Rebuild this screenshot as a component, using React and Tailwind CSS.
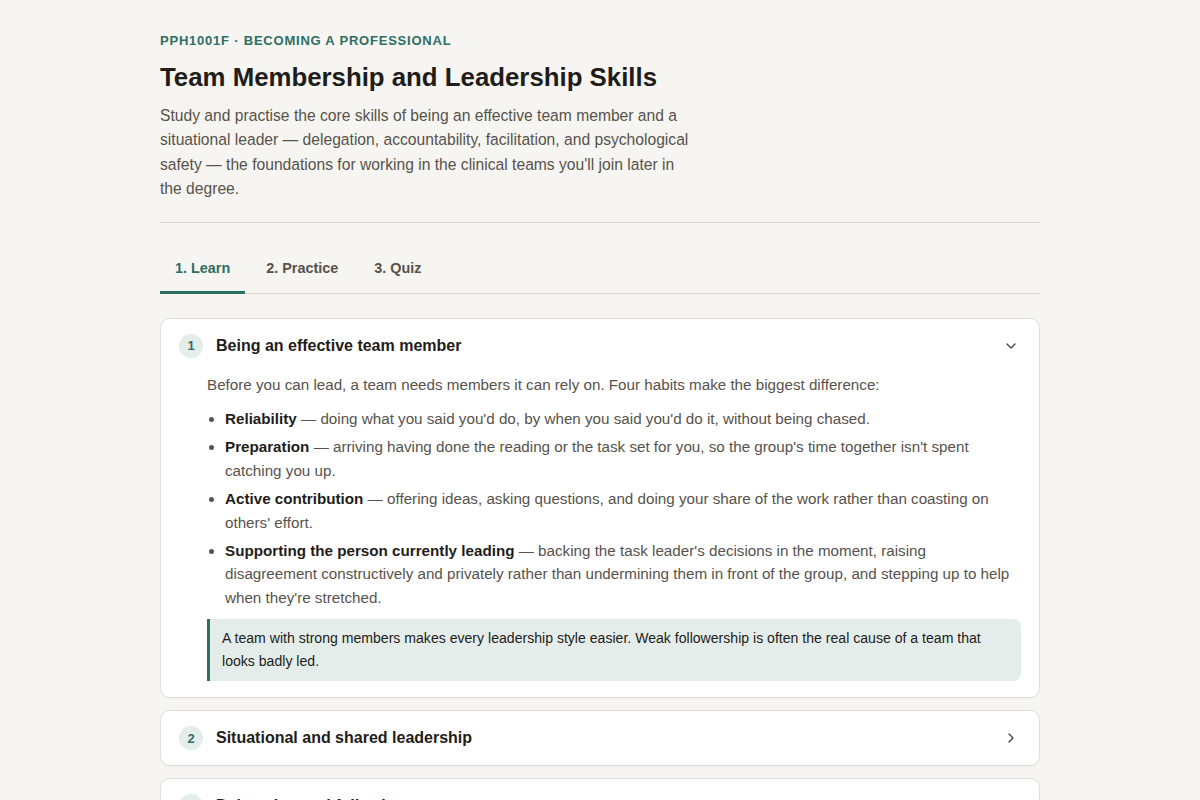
import { ChevronDown, ChevronRight } from 'lucide-react';

const habits = [
  {
    label: 'Reliability',
    text: "doing what you said you'd do, by when you said you'd do it, without being chased.",
  },
  {
    label: 'Preparation',
    text: "arriving having done the reading or the task set for you, so the group's time together isn't spent catching you up.",
  },
  {
    label: 'Active contribution',
    text: "offering ideas, asking questions, and doing your share of the work rather than coasting on others' effort.",
  },
  {
    label: 'Supporting the person currently leading',
    text: "backing the task leader's decisions in the moment, raising disagreement constructively and privately rather than undermining them in front of the group, and stepping up to help when they're stretched.",
  },
];

const tabs = ['1. Learn', '2. Practice', '3. Quiz'];

function SectionHeader({ num, title, open }) {
  return (
    <button className="w-full flex items-center gap-[13px] pl-[18px] pr-5 pt-[15px] pb-[14.5px] text-left">
      <span className="w-6 h-6 rounded-full bg-[#e4ede9] text-[#2f6e62] text-[13px] font-bold flex items-center justify-center shrink-0">
        {num}
      </span>
      <span className="flex-1 text-[16px] leading-6 font-bold text-[#1f1c1a]">{title}</span>
      {open ? (
        <ChevronDown className="w-4 h-4 text-[#4a4540]" strokeWidth={2} />
      ) : (
        <ChevronRight className="w-4 h-4 text-[#4a4540]" strokeWidth={2} />
      )}
    </button>
  );
}

export default function App() {
  return (
    <div className="min-h-screen bg-[#f6f5f1] font-['Liberation_Sans',Arial,sans-serif]">
      <div className="w-[880px] mx-auto pt-[31px] pb-10">
        {/* Header */}
        <div className="text-[13px] leading-5 font-bold tracking-[0.06em] uppercase text-[#2f6e62]">
          PPH1001F · Becoming a Professional
        </div>
        <h1 className="mt-[10px] text-[25.8px] leading-8 font-bold text-[#1f1c1a]">
          Team Membership and Leadership Skills
        </h1>
        <p className="mt-[11px] w-[532px] text-[15.65px] leading-[24.4px] text-[#57524c]">
          Study and practise the core skills of being an effective team member and a situational
          leader — delegation, accountability, facilitation, and psychological safety — the
          foundations for working in the clinical teams you'll join later in the degree.
        </p>

        <div className="mt-[20px] border-t border-[#dcd8d1]" />

        {/* Tabs */}
        <div className="mt-6 flex gap-[6px] border-b border-[#dcd8d1]">
          {tabs.map((t, i) => (
            <button
              key={t}
              className={`-mb-px px-[15px] pt-[11px] pb-[13px] text-[14.4px] leading-5 font-bold border-b-[3px] ${
                i === 0 ? 'border-[#2f6e62] text-[#2f6e62]' : 'border-transparent text-[#57524c]'
              }`}
            >
              {t}
            </button>
          ))}
        </div>

        {/* Sections */}
        <div className="mt-6 flex flex-col gap-3">
          <div className="bg-white border border-[#e2ded7] rounded-[10px] shadow-[0_1px_2px_rgba(0,0,0,0.04)]">
            <SectionHeader num="1" title="Being an effective team member" open />
            <div className="pt-[1px] pl-[46px] pr-[18px] pb-4 text-[15.2px] leading-6 text-[#57524c]">
              <p>
                Before you can lead, a team needs members it can rely on. Four habits make the
                biggest difference:
              </p>
              <ul className="mt-[10px] pl-[18px] list-disc flex flex-col gap-[4.5px] marker:text-[#57524c]">
                {habits.map((h) => (
                  <li key={h.label} className="leading-[23.6px]">
                    <strong className="font-bold text-[#1f1c1a]">{h.label}</strong> — {h.text}
                  </li>
                ))}
              </ul>
              <div className="mt-[10px] border-l-[3px] border-[#2f6e62] bg-[#e4ede9] rounded-r-lg pl-3 pr-4 py-2 text-[14.08px] leading-[23px] text-[#1f1c1a]">
                A team with strong members makes every leadership style easier. Weak followership
                is often the real cause of a team that looks badly led.
              </div>
            </div>
          </div>

          <div className="bg-white border border-[#e2ded7] rounded-[10px] shadow-[0_1px_2px_rgba(0,0,0,0.04)]">
            <SectionHeader num="2" title="Situational and shared leadership" />
          </div>

          <div className="bg-white border border-[#e2ded7] rounded-[10px] shadow-[0_1px_2px_rgba(0,0,0,0.04)]">
            <SectionHeader num="3" title="Delegation and following" />
          </div>
        </div>
      </div>
    </div>
  );
}
